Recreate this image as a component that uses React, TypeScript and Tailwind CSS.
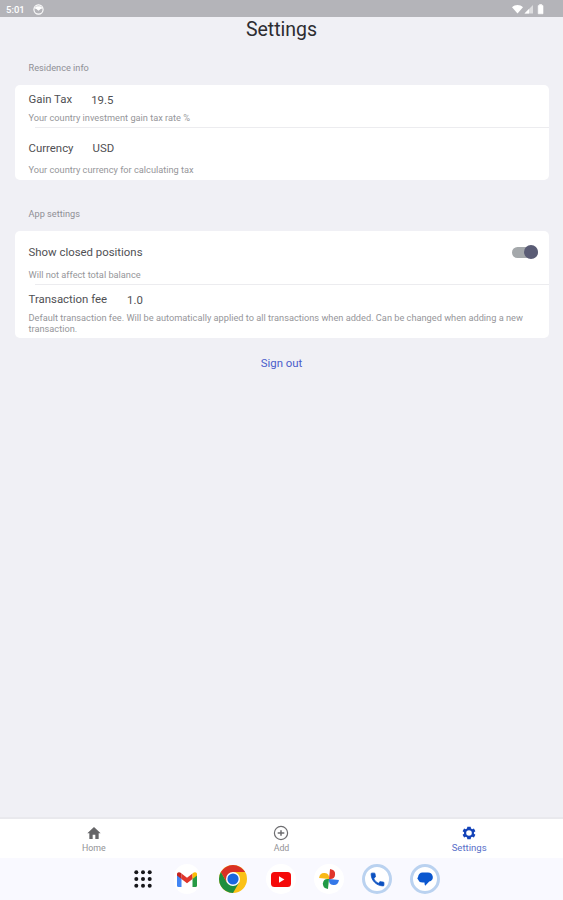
import clsx from 'clsx'
import type { ReactNode } from 'react'

export default function App() {
  return (
    <div className="flex h-[900px] w-[563px] flex-col overflow-hidden bg-[#f0f0f5] font-['Roboto',sans-serif] text-[#505054]">
      <StatusBar />
      <h1 className="h-[24px] pt-px text-center text-[19.5px] leading-[24px] font-normal text-[#2d2d31]">Settings</h1>

      <main className="flex flex-1 flex-col px-[14.5px]">
        <SectionTitle className="mt-[20px]">Residence info</SectionTitle>
        <section className="mt-[11px] h-[95px] rounded-[5px] bg-white">
          <div className="h-[42px] px-[14px] pt-[7px]">
            <Field label="Gain Tax" value="19.5" gap="gap-[19px]" />
            <Hint className="mt-[6px]">Your country investment gain tax rate %</Hint>
          </div>
          <Divider />
          <div className="px-[14px] pt-[13px]">
            <Field label="Currency" value="USD" gap="gap-[19px]" flat />
            <Hint className="mt-[9px]">Your country currency for calculating tax</Hint>
          </div>
        </section>

        <SectionTitle className="mt-[27px]">App settings</SectionTitle>
        <section className="mt-[11px] h-[107px] rounded-[5px] bg-white">
          <div className="h-[53px] px-[14px] pt-[14px]">
            <div className="flex h-[14px] items-center justify-between">
              <span className="text-[11.4px] leading-[14px]">Show closed positions</span>
              <Toggle />
            </div>
            <Hint className="mt-[10px]">Will not affect total balance</Hint>
          </div>
          <Divider />
          <div className="px-[14px] pt-[7px]">
            <Field label="Transaction fee" value="1.0" gap="gap-[20px]" />
            <Hint className="mt-[6px]">
              Default transaction fee. Will be automatically applied to all transactions when added. Can be changed when
              adding a new transaction.
            </Hint>
          </div>
        </section>

        <button type="button" className="mt-[18px] self-center text-[11.4px] leading-[15px] text-[#4a5ccb]">
          Sign out
        </button>
      </main>

      <TabBar />
      <Dock />
    </div>
  )
}

function StatusBar() {
  return (
    <header className="flex h-[17px] items-center justify-between bg-[#b4b4b9] pr-[17px] pl-[6px] text-white">
      <div className="flex items-center gap-[8px]">
        <span className="pt-px text-[9.5px] leading-[17px] font-medium">5:01</span>
        <svg width="11" height="11" viewBox="0 0 11 11" fill="none" className="mt-px">
          <circle cx="5.5" cy="5.5" r="4.6" stroke="#fff" strokeWidth="1.1" />
          <path d="M1.2 4.2 3.6 2.2h3.8l2.4 2L7.6 5 5.5 6.8 3.4 5z" fill="#fff" />
        </svg>
      </div>
      <svg width="34" height="11" viewBox="0 0 34 11" className="mt-px">
        <path d="M0 3.2C3 .4 8 .4 11 3.2L5.5 9.6z" fill="#fff" />
        <path d="M12.5 9.6 21 1v8.6z" fill="#fff" fillOpacity=".55" />
        <path d="M12.5 9.6 17 5v4.6z" fill="#fff" />
        <path d="M26.2 1.6h1.2V.6h2.4v1h1.2v8.2h-4.8z" fill="#fff" stroke="#fff" strokeWidth=".6" />
      </svg>
    </header>
  )
}

function SectionTitle({ children, className }: { children: ReactNode; className?: string }) {
  return <h2 className={clsx('px-[14px] text-[9.2px] leading-[13px] font-normal text-[#8f8f95]', className)}>{children}</h2>
}

interface FieldProps {
  label: string
  value: string
  gap: string
  flat?: boolean
}

function Field({ label, value, gap, flat }: FieldProps) {
  return (
    <div className={clsx('flex h-[14px] text-[11.4px] leading-[14px]', gap)}>
      <span>{label}</span>
      <span className={clsx(!flat && 'mt-px')}>{value}</span>
    </div>
  )
}

function Hint({ children, className }: { children: ReactNode; className?: string }) {
  return <p className={clsx('text-[9.22px] leading-[11px] text-[#96969a]', className)}>{children}</p>
}

function Divider() {
  return <div className="ml-[20px] h-px bg-[#ececef]" />
}

function Toggle() {
  return (
    <span role="switch" aria-checked="true" className="-mr-[3px] flex h-[11px] w-[26px] items-center justify-end rounded-full bg-[#a4a8ab]">
      <span className="size-[14px] shrink-0 rounded-full bg-[#5a5c75]" />
    </span>
  )
}

function TabBar() {
  return (
    <nav className="grid h-[41px] grid-cols-3 border-t-2 border-[#e9e9ed] bg-white text-[8.8px] leading-[11px] text-[#929296]">
      <Tab label="Home">
        <svg width="16" height="16" viewBox="0 0 24 24" fill="#666668">
          <path d="M10 21v-6.500h4V21h5v-8.500h3L12 3 2 12.500h3V21z" />
        </svg>
      </Tab>
      <Tab label="Add">
        <svg width="16" height="16" viewBox="0 0 16 16" fill="none" stroke="#6d6d70">
          <circle cx="8" cy="8" r="6.600" strokeWidth="1.200" />
          <path d="M8 5.300v5.400M4.700 8h6.600" strokeWidth="1.500" />
        </svg>
      </Tab>
      <Tab label="Settings" active>
        <svg width="16" height="16" viewBox="0 0 24 24" fill="#1443b8">
          <path
            fillRule="evenodd"
            d="M19.400 13a7.500 7.500 0 0 0 0-2l2.200-1.700-2.200-3.900-2.700 1a7.500 7.500 0 0 0-1.700-1L14.500 2.500h-5L9 5.400a7.500 7.500 0 0 0-1.700 1l-2.700-1-2.200 3.900L4.600 11a7.500 7.500 0 0 0 0 2l-2.200 1.700 2.200 3.900 2.700-1a7.500 7.500 0 0 0 1.700 1l.5 2.900h5l.5-2.900a7.500 7.500 0 0 0 1.700-1l2.700 1 2.200-3.900zM12 16.200a4.200 4.200 0 1 1 0-8.400 4.200 4.200 0 0 1 0 8.400z"
          />
        </svg>
      </Tab>
    </nav>
  )
}

function Tab({ label, active, children }: { label: string; active?: boolean; children: ReactNode }) {
  return (
    <button type="button" className="flex flex-col items-center pt-[6px]">
      {children}
      <span className={clsx(active ? 'mt-px text-[9.6px] text-[#5a6fc9]' : 'mt-[2px]')}>{label}</span>
    </button>
  )
}

function Dock() {
  return (
    <footer className="flex h-[42px] items-center justify-center gap-[18px] bg-[#f9f9ff] pl-[7px]">
      <DockItem className="w-[26px]">
        <svg width="18" height="18" viewBox="0 0 18 18" fill="#17171b">
          {[2.3, 9, 15.7].map((y) => [2.3, 9, 15.7].map((x) => <circle key={`${x}-${y}`} cx={x} cy={y} r="2" />))}
        </svg>
      </DockItem>
      <DockItem className="w-[26px] bg-white">
        <svg width="20" height="15" viewBox="0 0 20 15">
          <path d="M0 2.500V13.500q0 1.500 1.500 1.500H4.500V5.500z" fill="#4285f4" />
          <path d="M20 2.500V13.500q0 1.500-1.500 1.500H15.500V5.500z" fill="#279b45" />
          <path d="M4.500 1.600 10 5.800l5.500-4.200V7L10 11.200 4.500 7z" fill="#e0352b" />
          <path d="M0 2v1.500L4.500 7V1.600L3.200.6Q1.500-.4.3 1z" fill="#c5221f" />
          <path d="M20 2v1.500L15.500 7V1.600l1.300-1Q18.500-.4 19.700 1z" fill="#fbbc04" />
        </svg>
      </DockItem>
      <DockItem className="w-[30px]">
        <svg width="28" height="28" viewBox="0 0 28 28">
          <circle cx="14" cy="14" r="14" fill="#fbc116" />
          <path d="M1.876 7A14 14 0 0 0 14 28L20.060 17.500 14 14 7.940 17.500z" fill="#1e8e3e" />
          <path d="M1.876 7A14 14 0 0 1 26.124 7H14L7.940 17.500z" fill="#d93025" />
          <circle cx="14" cy="14" r="7" fill="#fff" />
          <circle cx="14" cy="14" r="5.600" fill="#1a67e0" />
        </svg>
      </DockItem>
      <DockItem className="w-[30px] bg-white">
        <svg width="20" height="15" viewBox="0 0 20 15">
          <rect width="20" height="15" rx="3.500" fill="#f50a0a" />
          <path d="M8 4.200v6.600l5.400-3.300z" fill="#fff" />
        </svg>
      </DockItem>
      <DockItem className="w-[30px] bg-white">
        <svg width="22" height="22" viewBox="-1 -1 22 22">
          <g transform="rotate(6 10 10)">
            <path d="M10 0q5.600.2 5.600 5.200T10 10z" fill="#e0352b" />
            <path d="M20 10q-.2 5.600-5.200 5.600T10 10z" fill="#3478e8" />
            <path d="M10 20q-5.600-.2-5.600-5.200T10 10z" fill="#219a46" />
            <path d="M0 10q.2-5.600 5.200-5.600T10 10z" fill="#f9b917" />
          </g>
        </svg>
      </DockItem>
      <DockItem className="w-[30px] border-[3px] border-[#bad2f0] bg-white">
        <svg width="17" height="17" viewBox="0 0 24 24" fill="#0b50c0" stroke="#0b50c0" strokeWidth="1.2" strokeLinejoin="round">
          <path d="M6.600 10.800c1.400 2.800 3.800 5.200 6.600 6.600l2.200-2.200c.3-.3.700-.4 1-.2 1.200.4 2.400.6 3.600.6.600 0 1 .4 1 1V20c0 .6-.4 1-1 1C10.600 21 3 13.400 3 4c0-.6.500-1 1-1h3.500c.6 0 1 .4 1 1 0 1.200.2 2.500.6 3.600.1.400 0 .7-.2 1z" />
        </svg>
      </DockItem>
      <DockItem className="w-[30px] border-[3px] border-[#bad2f0] bg-white">
        <svg width="16" height="14" viewBox="0 0 16 14" fill="#0b57cf">
          <path d="M5.500.5h5a5 4.600 0 0 1 1.700 9L8.200 13.800Q7.400 12.500 7.500 10.500H5.500Q2.200 10.500 1.400 8L.3 6.500 1 5Q1.800.5 5.500.5z" />
        </svg>
      </DockItem>
    </footer>
  )
}

function DockItem({ children, className }: { children: ReactNode; className: string }) {
  return (
    <span className={clsx('flex h-[30px] shrink-0 items-center justify-center rounded-full', className)}>{children}</span>
  )
}
